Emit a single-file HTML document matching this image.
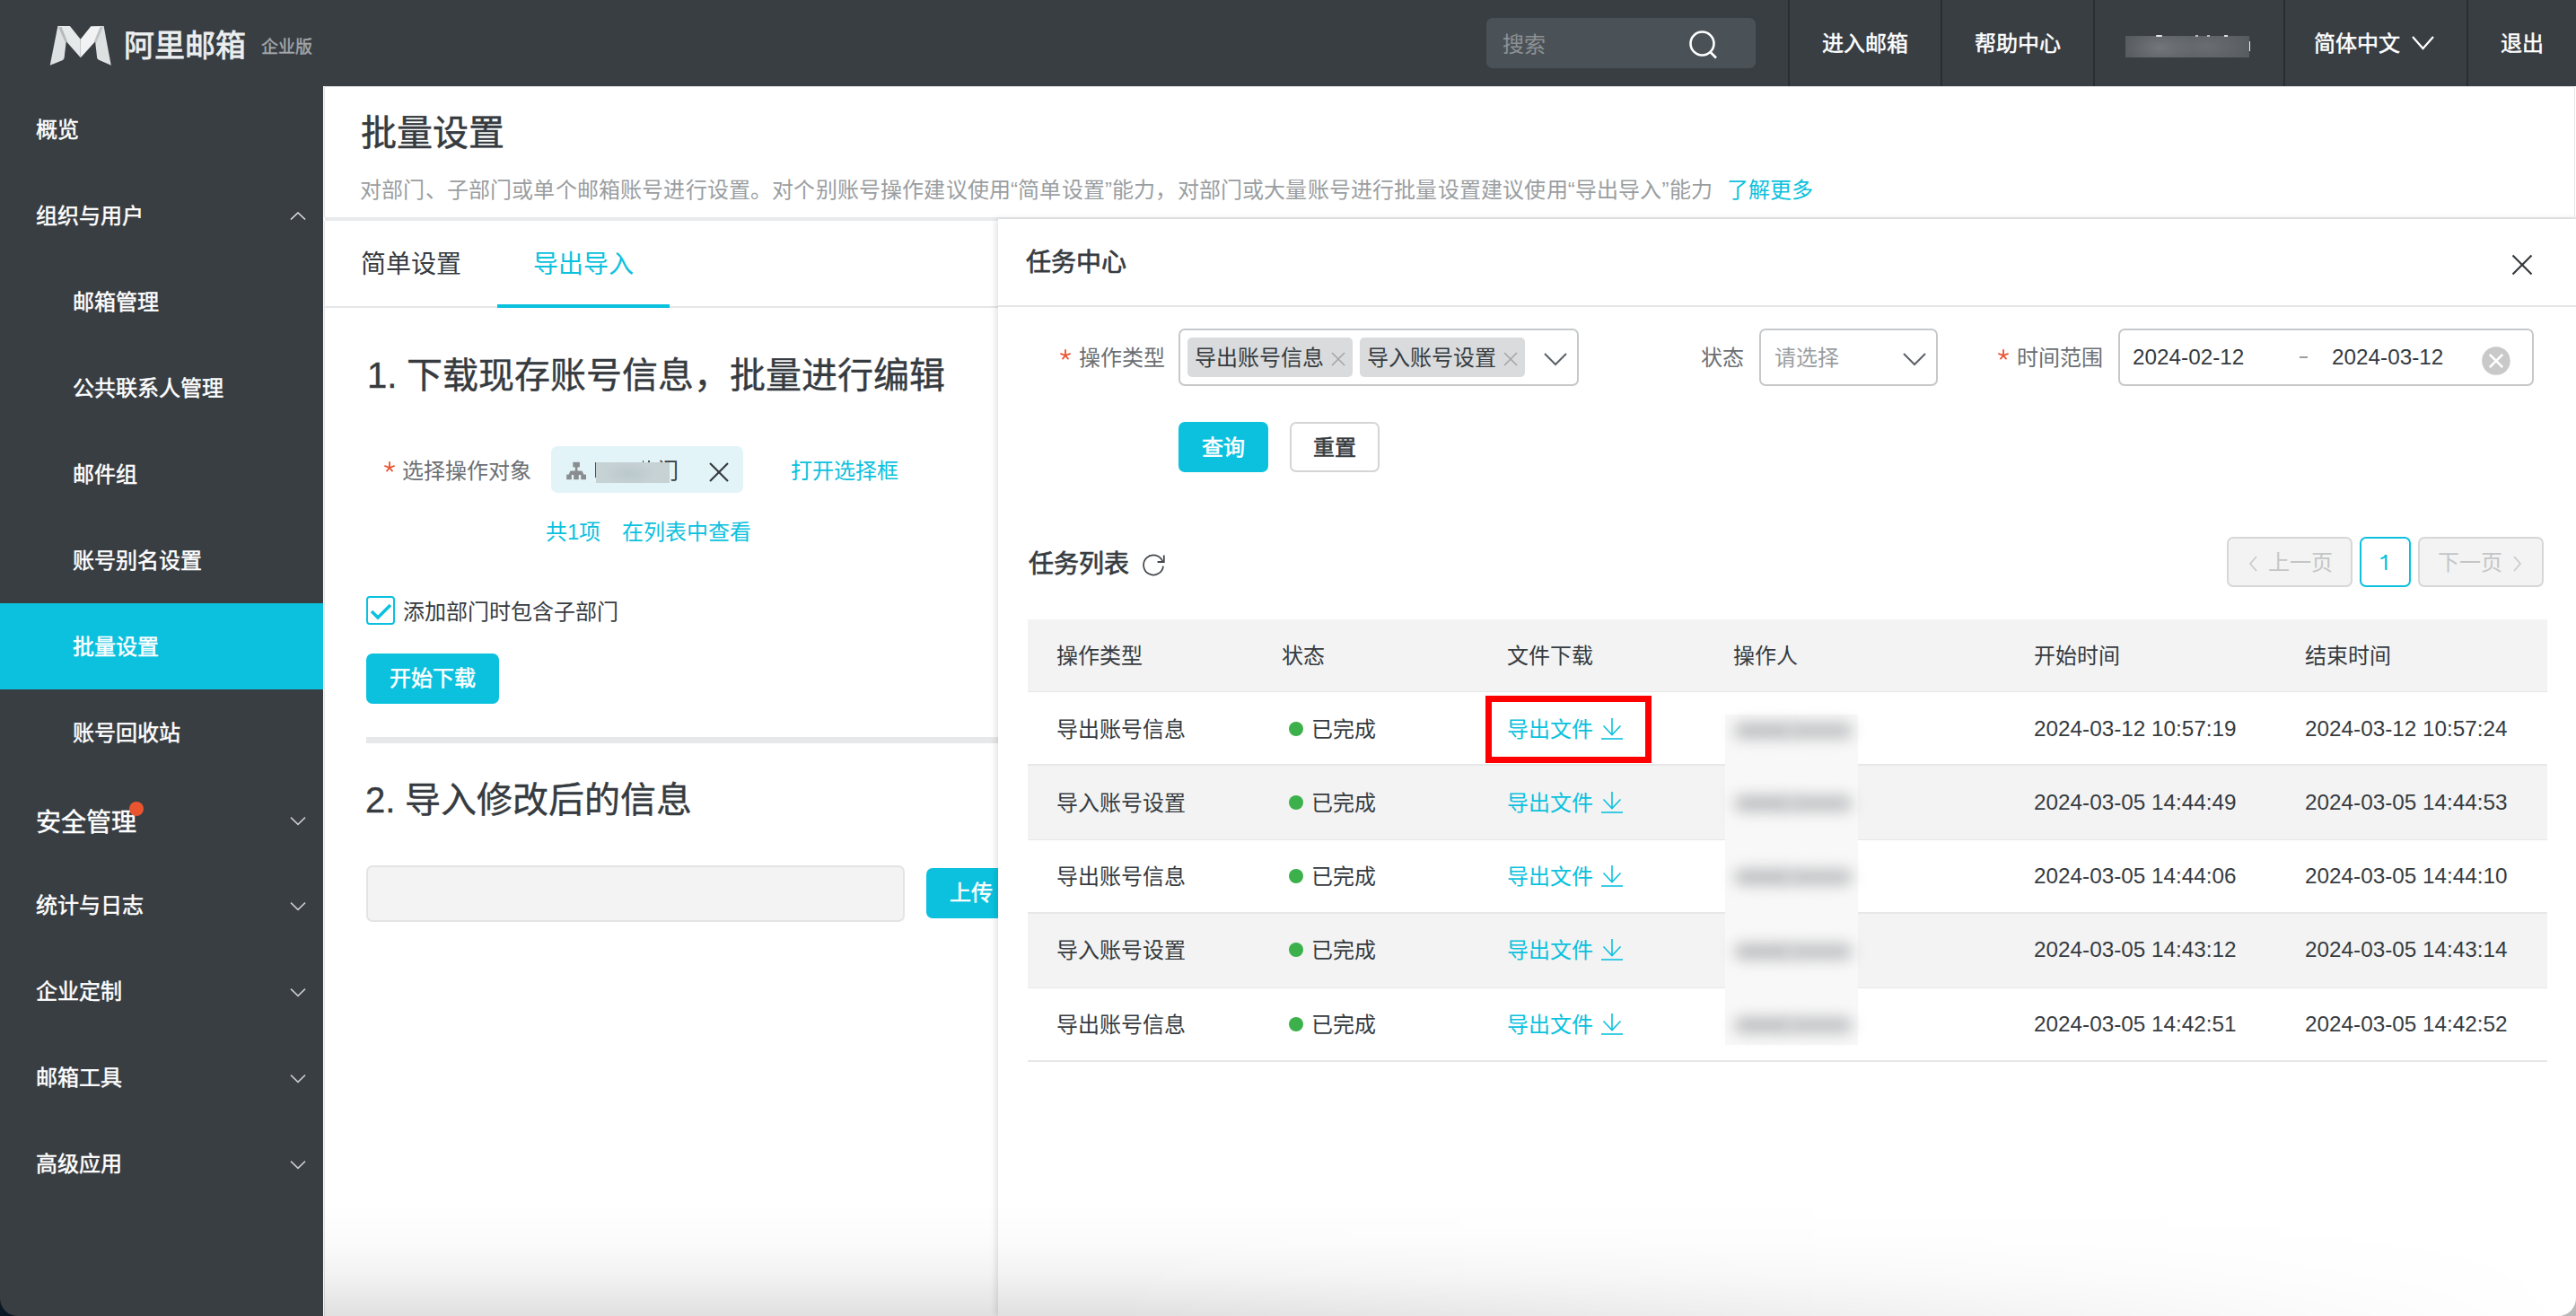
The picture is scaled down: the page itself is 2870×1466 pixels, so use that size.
<!DOCTYPE html>
<html lang="zh-CN"><head><meta charset="utf-8">
<style>
*{box-sizing:border-box;margin:0;padding:0}
html,body{width:2870px;height:1466px;overflow:hidden;background:#ffffff;font-family:"Liberation Sans",sans-serif;}
.a{position:absolute;white-space:nowrap}
.t24{font-size:24px;line-height:24px}
.t28{font-size:28px;line-height:28px}
.t40{font-size:40px;line-height:40px}
#hdr{position:absolute;left:0;top:0;width:2870px;height:96px;background:#393e43}
#side{position:absolute;left:0;top:96px;width:360px;height:1370px;background:#393e43;}
.sdiv{position:absolute;top:0;width:2px;height:96px;background:#2a2e32}
.navt{color:#fff;-webkit-text-stroke:0.5px #fff}
.side1{color:#fff;left:40px;-webkit-text-stroke:0.5px #fff}
.side2{color:#fff;left:81px;-webkit-text-stroke:0.5px #fff}
.chev{position:absolute;width:20px;height:20px}
.cy{color:#0bc1de}
.gray6{color:#6b6f73}
.dark{color:#363b40}
</style></head><body>
<div id="hdr">
  <svg class="a" style="left:50px;top:24px" width="82" height="54" viewBox="0 0 82 54">
    <polygon points="14.4,5.1 22,9 23.4,25 21.5,41 20,43 5.7,48.8" fill="#dde1e2"/>
    <polygon points="65.6,4.9 58,9 56.4,25 58.2,41 60,42.8 73.8,48.8" fill="#dde1e2"/>
    <polygon points="14.4,5.1 27.9,5.1 39.7,19.7 39.8,40.2 24.6,23" fill="#e6e9ea"/>
    <polygon points="65.6,4.9 51.3,5.3 39.7,19.7 39.8,40.2 55.4,23" fill="#f0f2f3"/>
    <polygon points="15,6 18.5,6 25,22 23.2,24.2" fill="#b7babd"/>
    <polygon points="65,5.5 61.5,5.8 55,22 56.8,24.2" fill="#c0c3c5"/>
  </svg>
  <div class="a" style="left:138px;top:34px;font-size:34px;line-height:34px;color:#eceeef;letter-spacing:0px;-webkit-text-stroke:0.8px #eceeef">阿里邮箱</div>
  <div class="a" style="left:291px;top:43px;font-size:19px;line-height:19px;color:#a4a8ab;-webkit-text-stroke:0.4px #a4a8ab">企业版</div>
  <div class="a" style="left:1656px;top:20px;width:300px;height:56px;border-radius:7px;background:#4b5257"></div>
  <div class="a t24" style="left:1674px;top:38px;color:#8d9195">搜索</div>
  <svg class="a" style="left:1876px;top:28px" width="40" height="40" viewBox="0 0 40 40">
    <circle cx="20.5" cy="20.5" r="13" fill="none" stroke="#fff" stroke-width="2.6"/>
    <line x1="29.5" y1="30" x2="36" y2="36.5" stroke="#fff" stroke-width="2.6"/>
  </svg>
  <div class="sdiv" style="left:1992px"></div>
  <div class="sdiv" style="left:2162px"></div>
  <div class="sdiv" style="left:2332px"></div>
  <div class="sdiv" style="left:2544px"></div>
  <div class="sdiv" style="left:2748px"></div>
  <div class="a t24 navt" style="left:2030px;top:37px">进入邮箱</div>
  <div class="a t24 navt" style="left:2200px;top:37px">帮助中心</div>
  <div class="a" style="left:2368px;top:40px;width:138px;height:24px;background:radial-gradient(ellipse 40px 22px at 28% 55%,#73777b,rgba(115,119,123,0)),radial-gradient(ellipse 50px 22px at 65% 50%,#6a6e72,rgba(106,110,114,0)),#575c60"></div>
<div class="a" style="left:2402px;top:38.5px;width:7px;height:2px;border-radius:1px;background:#e8e8e8"></div>
<div class="a" style="left:2446px;top:39px;width:3px;height:1.5px;background:#bbb"></div>
<div class="a" style="left:2459px;top:39px;width:3px;height:1.5px;background:#bbb"></div>
<div class="a" style="left:2478px;top:38.5px;width:4px;height:2px;background:#ddd"></div>
<div class="a" style="left:2505.5px;top:46px;width:1.6px;height:11px;background:#f0f0f0"></div>
  <div class="a t24 navt" style="left:2578px;top:37px">简体中文</div>
  <svg class="a" style="left:2686px;top:38px" width="28" height="20" viewBox="0 0 28 20">
    <polyline points="2,3 13.5,16 25,3" fill="none" stroke="#fff" stroke-width="2.2"/>
  </svg>
  <div class="a t24 navt" style="left:2786px;top:37px">退出</div>
</div>

<div id="side"></div>
<div class="a" style="left:0;top:672px;width:360px;height:96px;background:#0bc1de"></div>
<div class="a t24 side1" style="top:133px">概览</div>
<div class="a t24 side1" style="top:229px">组织与用户</div>
<svg class="a" style="left:322px;top:230px" width="20" height="20" viewBox="0 0 20 20"><polyline points="2,14.5 10,7 18,14.5" fill="none" stroke="#e6e7e8" stroke-width="1.5"/></svg>
<div class="a t24 side2" style="top:325px">邮箱管理</div>
<div class="a t24 side2" style="top:421px">公共联系人管理</div>
<div class="a t24 side2" style="top:517px">邮件组</div>
<div class="a t24 side2" style="top:613px">账号别名设置</div>
<div class="a t24 side2" style="top:709px">批量设置</div>
<div class="a t24 side2" style="top:805px">账号回收站</div>
<div class="a t28 side1" style="top:903px">安全管理</div>
<div class="a" style="left:144px;top:893px;width:16px;height:16px;border-radius:50%;background:#ea5530"></div>
<svg class="a" style="left:322px;top:903px" width="20" height="20" viewBox="0 0 20 20"><polyline points="2,7.6 10,15.4 18,7.6" fill="none" stroke="#cbcdcf" stroke-width="1.5"/></svg>
<div class="a t24 side1" style="top:997px">统计与日志</div>
<svg class="a" style="left:322px;top:998px" width="20" height="20" viewBox="0 0 20 20"><polyline points="2,7.6 10,15.4 18,7.6" fill="none" stroke="#cbcdcf" stroke-width="1.5"/></svg>
<div class="a t24 side1" style="top:1093px">企业定制</div>
<svg class="a" style="left:322px;top:1094px" width="20" height="20" viewBox="0 0 20 20"><polyline points="2,7.6 10,15.4 18,7.6" fill="none" stroke="#cbcdcf" stroke-width="1.5"/></svg>
<div class="a t24 side1" style="top:1189px">邮箱工具</div>
<svg class="a" style="left:322px;top:1190px" width="20" height="20" viewBox="0 0 20 20"><polyline points="2,7.6 10,15.4 18,7.6" fill="none" stroke="#cbcdcf" stroke-width="1.5"/></svg>
<div class="a t24 side1" style="top:1285px">高级应用</div>
<svg class="a" style="left:322px;top:1286px" width="20" height="20" viewBox="0 0 20 20"><polyline points="2,7.6 10,15.4 18,7.6" fill="none" stroke="#cbcdcf" stroke-width="1.5"/></svg>


<!-- page header card -->
<div class="a" style="left:361px;top:96px;width:2508px;height:147px;background:#fff;border:1.5px solid #e3e5e6;border-radius:2px"></div>
<div class="a" style="left:362px;top:242px;width:2508px;height:4px;background:#e8eaeb"></div>
<div class="a" style="left:361px;top:246px;width:2509px;height:1220px;background:#fff;border-left:1px solid #e3e5e6"></div>
<div class="a t40 dark" style="left:402px;top:128px;-webkit-text-stroke:0.5px #363b40">批量设置</div>
<div class="a t24" style="left:401px;top:200px;color:#9a9ea1;letter-spacing:0.17px">对部门、子部门或单个邮箱账号进行设置。对个别账号操作建议使用“简单设置”能力，对部门或大量账号进行批量设置建议使用“导出导入”能力</div>
<div class="a t24 cy" style="left:1924px;top:200px">了解更多</div>
<!-- tabs -->
<div class="a t28 dark" style="left:402px;top:281px">简单设置</div>
<div class="a t28 cy" style="left:594px;top:281px">导出导入</div>
<div class="a" style="left:362px;top:341px;width:750px;height:2px;background:#e4e6e7"></div>
<div class="a" style="left:554px;top:339px;width:192px;height:4px;background:#0bc1de"></div>
<!-- section 1 -->
<div class="a t40 dark" style="left:409px;top:398px;-webkit-text-stroke:0.4px #363b40">1. 下载现存账号信息，批量进行编辑</div>
<svg class="a" style="left:425.8px;top:511.9px" width="16" height="16" viewBox="0 0 16 16"><g stroke="#ea5130" stroke-width="1.8" stroke-linecap="round" transform="translate(8,9)"><line x1="0" y1="0" x2="0" y2="-6"/><line x1="0" y1="0" x2="-5" y2="-1.9"/><line x1="0" y1="0" x2="5" y2="-1.9"/><line x1="0" y1="0" x2="-3" y2="3.6"/><line x1="0" y1="0" x2="3" y2="3.6"/></g></svg>
<div class="a t24 gray6" style="left:448px;top:513px">选择操作对象</div>
<div class="a" style="left:614px;top:497px;width:214px;height:52px;border-radius:7px;background:#e2f4f8"></div>
<svg class="a" style="left:630px;top:513px" width="24" height="24" viewBox="0 0 24 24">
  <rect x="8.3" y="1.8" width="7.6" height="5.6" fill="#8a8d90"/>
  <rect x="10.8" y="7" width="2.6" height="5" fill="#8a8d90"/>
  <polygon points="3.5,16 5.5,11.5 18.5,11.5 20.5,16" fill="#8a8d90"/>
  <rect x="1.2" y="15.6" width="5.6" height="5.6" fill="#8a8d90"/>
  <rect x="9.2" y="15.6" width="5.6" height="5.6" fill="#8a8d90"/>
  <rect x="17.2" y="15.6" width="5.8" height="5.6" fill="#8a8d90"/>
  <rect x="10.8" y="11" width="2.6" height="5" fill="#8a8d90"/>
</svg>
<div class="a t24 dark" style="left:732px;top:513px">门</div>
<div class="a" style="left:663px;top:515px;width:1.6px;height:17px;background:#4a4f53"></div>
<div class="a" style="left:715.5px;top:513px;width:1.6px;height:3px;background:#4a4f53"></div>
<div class="a" style="left:722px;top:513px;width:1.6px;height:3px;background:#4a4f53"></div>
<div class="a" style="left:664px;top:514.5px;width:82px;height:23px;background:radial-gradient(ellipse 30px 14px at 45% 55%,#bac8cc,rgba(186,200,204,0)),#c7d2d5"></div>
<svg class="a" style="left:788px;top:513px" width="26" height="26" viewBox="0 0 26 26">
  <line x1="3" y1="3" x2="23" y2="23" stroke="#34393d" stroke-width="2.2"/>
  <line x1="23" y1="3" x2="3" y2="23" stroke="#34393d" stroke-width="2.2"/>
</svg>
<div class="a t24 cy" style="left:881px;top:513px">打开选择框</div>
<div class="a t24 cy" style="left:608px;top:581px">共1项</div>
<div class="a t24 cy" style="left:693px;top:581px">在列表中查看</div>
<div class="a" style="left:408px;top:664px;width:32px;height:32px;border:2px solid #0bc1de;border-radius:4px;background:#fff"></div>
<svg class="a" style="left:408px;top:664px" width="32" height="32" viewBox="0 0 32 32">
  <polyline points="6,17 13,24 27,10" fill="none" stroke="#0bc1de" stroke-width="3.5"/>
</svg>
<div class="a t24 dark" style="left:449px;top:670px">添加部门时包含子部门</div>
<div class="a" style="left:408px;top:728px;width:148px;height:56px;border-radius:7px;background:#0bc1de"></div>
<div class="a t24" style="left:434px;top:744px;color:#fff;-webkit-text-stroke:0.6px #fff">开始下载</div>
<div class="a" style="left:408px;top:821px;width:704px;height:7px;background:#e6e8ea"></div>
<div class="a t40 dark" style="left:407px;top:871px;-webkit-text-stroke:0.4px #363b40">2. 导入修改后的信息</div>
<div class="a" style="left:408px;top:964px;width:600px;height:63px;border-radius:7px;background:#f3f3f3;border:2px solid #e4e4e4"></div>
<div class="a" style="left:1032px;top:967px;width:100px;height:56px;border-radius:7px;background:#0bc1de"></div>
<div class="a t24" style="left:1058px;top:983px;color:#fff;-webkit-text-stroke:0.6px #fff">上传</div>


<!-- task panel -->
<div class="a" style="left:1112px;top:244px;width:1758px;height:1222px;background:#fff;box-shadow:-2px 0 7px rgba(0,0,0,0.13)"></div>
<div class="a t28 dark" style="left:1143px;top:279px;-webkit-text-stroke:0.7px #363b40">任务中心</div>
<svg class="a" style="left:2797px;top:282px" width="26" height="26" viewBox="0 0 26 26">
  <line x1="2.5" y1="2.5" x2="23.5" y2="23.5" stroke="#34393d" stroke-width="2.2"/>
  <line x1="23.5" y1="2.5" x2="2.5" y2="23.5" stroke="#34393d" stroke-width="2.2"/>
</svg>
<div class="a" style="left:1112px;top:340px;width:1758px;height:2px;background:#e4e6e7"></div>
<!-- filters -->
<svg class="a" style="left:1178.7px;top:386.9px" width="16" height="16" viewBox="0 0 16 16"><g stroke="#ea5130" stroke-width="1.8" stroke-linecap="round" transform="translate(8,9)"><line x1="0" y1="0" x2="0" y2="-6"/><line x1="0" y1="0" x2="-5" y2="-1.9"/><line x1="0" y1="0" x2="5" y2="-1.9"/><line x1="0" y1="0" x2="-3" y2="3.6"/><line x1="0" y1="0" x2="3" y2="3.6"/></g></svg>
<div class="a t24 gray6" style="left:1202px;top:387px">操作类型</div>
<div class="a" style="left:1313px;top:366px;width:446px;height:64px;border:2px solid #c6c8ca;border-radius:7px;background:#fff"></div>
<div class="a" style="left:1323px;top:376px;width:184px;height:44px;border-radius:5px;background:#dadbdd"></div>
<div class="a t24 dark" style="left:1331px;top:387px">导出账号信息</div>
<svg class="a" style="left:1482px;top:391px" width="18" height="18" viewBox="0 0 18 18"><line x1="2" y1="2" x2="16" y2="16" stroke="#a3a6a9" stroke-width="1.6"/><line x1="16" y1="2" x2="2" y2="16" stroke="#a3a6a9" stroke-width="1.6"/></svg>
<div class="a" style="left:1515px;top:376px;width:184px;height:44px;border-radius:5px;background:#dadbdd"></div>
<div class="a t24 dark" style="left:1523px;top:387px">导入账号设置</div>
<svg class="a" style="left:1674px;top:391px" width="18" height="18" viewBox="0 0 18 18"><line x1="2" y1="2" x2="16" y2="16" stroke="#a3a6a9" stroke-width="1.6"/><line x1="16" y1="2" x2="2" y2="16" stroke="#a3a6a9" stroke-width="1.6"/></svg>
<svg class="a" style="left:1719px;top:390px" width="28" height="20" viewBox="0 0 28 20"><polyline points="2,4 14,16 26,4" fill="none" stroke="#5c6166" stroke-width="2"/></svg>

<div class="a t24 gray6" style="left:1895px;top:387px">状态</div>
<div class="a" style="left:1960px;top:366px;width:199px;height:64px;border:2px solid #c6c8ca;border-radius:7px;background:#fff"></div>
<div class="a t24" style="left:1977px;top:387px;color:#9a9ea1">请选择</div>
<svg class="a" style="left:2119px;top:390px" width="28" height="20" viewBox="0 0 28 20"><polyline points="2,4 14,16 26,4" fill="none" stroke="#5c6166" stroke-width="2"/></svg>

<svg class="a" style="left:2224.4px;top:386.9px" width="16" height="16" viewBox="0 0 16 16"><g stroke="#ea5130" stroke-width="1.8" stroke-linecap="round" transform="translate(8,9)"><line x1="0" y1="0" x2="0" y2="-6"/><line x1="0" y1="0" x2="-5" y2="-1.9"/><line x1="0" y1="0" x2="5" y2="-1.9"/><line x1="0" y1="0" x2="-3" y2="3.6"/><line x1="0" y1="0" x2="3" y2="3.6"/></g></svg>
<div class="a t24 gray6" style="left:2247px;top:387px">时间范围</div>
<div class="a" style="left:2360px;top:366px;width:463px;height:64px;border:2px solid #c6c8ca;border-radius:7px;background:#fff"></div>
<div class="a t24 dark" style="left:2376px;top:386px;font-size:24.3px">2024-02-12</div>
<div class="a" style="left:2562px;top:397px;width:9px;height:2px;background:#9a9ea1"></div>
<div class="a t24 dark" style="left:2598px;top:386px;font-size:24.3px">2024-03-12</div>
<svg class="a" style="left:2765px;top:386px" width="32" height="32" viewBox="0 0 32 32"><circle cx="16" cy="16" r="15.8" fill="#c9c9c9"/><line x1="8.8" y1="8.8" x2="23.2" y2="23.2" stroke="#fff" stroke-width="2.6"/><line x1="23.2" y1="8.8" x2="8.8" y2="23.2" stroke="#fff" stroke-width="2.6"/></svg>

<div class="a" style="left:1313px;top:470px;width:100px;height:56px;border-radius:7px;background:#0bc1de"></div>
<div class="a t24" style="left:1339px;top:487px;color:#fff;-webkit-text-stroke:0.6px #fff">查询</div>
<div class="a" style="left:1437px;top:470px;width:100px;height:56px;border-radius:7px;background:#fff;border:2px solid #d3d5d6"></div>
<div class="a t24 dark" style="left:1463px;top:487px;-webkit-text-stroke:0.6px #363b40">重置</div>

<div class="a t28 dark" style="left:1146px;top:615px;-webkit-text-stroke:0.7px #363b40">任务列表</div>
<svg class="a" style="left:1270px;top:614.5px" width="30" height="30" viewBox="0 0 30 30"><path d="M26,15.6 A11,11 0 1 1 25.2,10.2" fill="none" stroke="#43484d" stroke-width="1.7"/><polyline points="19.6,11 26.8,11 26.8,3.4" fill="none" stroke="#43484d" stroke-width="1.8"/></svg>

<!-- pagination -->
<div class="a" style="left:2481px;top:598px;width:140px;height:56px;border-radius:7px;background:#f3f3f3;border:2px solid #d6d7d8"></div>
<svg class="a" style="left:2504px;top:618px" width="14" height="20" viewBox="0 0 14 20"><polyline points="10,2 3,10 10,18" fill="none" stroke="#c8c9ca" stroke-width="1.6"/></svg>
<div class="a t24" style="left:2527px;top:615px;color:#c4c5c6">上一页</div>
<div class="a" style="left:2629px;top:598px;width:57px;height:56px;border-radius:7px;background:#fff;border:2px solid #0bc1de"></div>
<svg class="a" style="left:2648px;top:614px" width="16" height="24" viewBox="0 0 16 24"><path d="M10.3,4 V21" stroke="#0bc1de" stroke-width="2.3" fill="none"/><path d="M4.5,8.2 C7.5,7.6 9.5,6 10,4" stroke="#0bc1de" stroke-width="2" fill="none"/></svg>
<div class="a" style="left:2694px;top:598px;width:140px;height:56px;border-radius:7px;background:#f3f3f3;border:2px solid #d6d7d8"></div>
<div class="a t24" style="left:2716px;top:615px;color:#c4c5c6">下一页</div>
<svg class="a" style="left:2797px;top:618px" width="14" height="20" viewBox="0 0 14 20"><polyline points="4,2 11,10 4,18" fill="none" stroke="#c8c9ca" stroke-width="1.6"/></svg>

<div class="a" style="left:1145px;top:690px;width:1693px;height:80px;background:#f3f3f3"></div>
<div class="a t24 dark" style="left:1177px;top:719px">操作类型</div>
<div class="a t24 dark" style="left:1428px;top:719px">状态</div>
<div class="a t24 dark" style="left:1679px;top:719px">文件下载</div>
<div class="a t24 dark" style="left:1931px;top:719px">操作人</div>
<div class="a t24 dark" style="left:2266px;top:719px">开始时间</div>
<div class="a t24 dark" style="left:2568px;top:719px">结束时间</div>
<div class="a" style="left:1145px;top:770px;width:1693px;height:81.5px;background:#fff"></div>
<div class="a" style="left:1145px;top:769.5px;width:1693px;height:1.5px;background:#e6e8e8"></div>
<div class="a t24 dark" style="left:1177px;top:800.5px">导出账号信息</div>
<div class="a" style="left:1436px;top:803.5px;width:16px;height:16px;border-radius:50%;background:#3cb04a"></div>
<div class="a t24 dark" style="left:1461px;top:800.5px">已完成</div>
<div class="a t24 cy" style="left:1679px;top:800.5px">导出文件</div>
<svg class="a" style="left:1782px;top:797.5px" width="28" height="28" viewBox="0 0 28 28"><line x1="14" y1="2" x2="14" y2="21" stroke="#0bc1de" stroke-width="1.6"/><polyline points="4.5,10.5 14,20.5 23.5,10.5" fill="none" stroke="#0bc1de" stroke-width="1.6"/><line x1="2" y1="25" x2="26" y2="25" stroke="#0bc1de" stroke-width="1.6"/></svg>
<div class="a t24 dark" style="left:2266px;top:799.5px;font-size:24.3px">2024-03-12 10:57:19</div>
<div class="a t24 dark" style="left:2568px;top:799.5px;font-size:24.3px">2024-03-12 10:57:24</div>
<div class="a" style="left:1145px;top:851.5px;width:1693px;height:83.5px;background:#f3f3f3"></div>
<div class="a" style="left:1145px;top:851.0px;width:1693px;height:1.5px;background:#e6e8e8"></div>
<div class="a t24 dark" style="left:1177px;top:882.8px">导入账号设置</div>
<div class="a" style="left:1436px;top:885.8px;width:16px;height:16px;border-radius:50%;background:#3cb04a"></div>
<div class="a t24 dark" style="left:1461px;top:882.8px">已完成</div>
<div class="a t24 cy" style="left:1679px;top:882.8px">导出文件</div>
<svg class="a" style="left:1782px;top:879.8px" width="28" height="28" viewBox="0 0 28 28"><line x1="14" y1="2" x2="14" y2="21" stroke="#0bc1de" stroke-width="1.6"/><polyline points="4.5,10.5 14,20.5 23.5,10.5" fill="none" stroke="#0bc1de" stroke-width="1.6"/><line x1="2" y1="25" x2="26" y2="25" stroke="#0bc1de" stroke-width="1.6"/></svg>
<div class="a t24 dark" style="left:2266px;top:881.8px;font-size:24.3px">2024-03-05 14:44:49</div>
<div class="a t24 dark" style="left:2568px;top:881.8px;font-size:24.3px">2024-03-05 14:44:53</div>
<div class="a" style="left:1145px;top:935px;width:1693px;height:81.5px;background:#fff"></div>
<div class="a" style="left:1145px;top:934.5px;width:1693px;height:1.5px;background:#e6e8e8"></div>
<div class="a t24 dark" style="left:1177px;top:965px">导出账号信息</div>
<div class="a" style="left:1436px;top:968px;width:16px;height:16px;border-radius:50%;background:#3cb04a"></div>
<div class="a t24 dark" style="left:1461px;top:965px">已完成</div>
<div class="a t24 cy" style="left:1679px;top:965px">导出文件</div>
<svg class="a" style="left:1782px;top:962px" width="28" height="28" viewBox="0 0 28 28"><line x1="14" y1="2" x2="14" y2="21" stroke="#0bc1de" stroke-width="1.6"/><polyline points="4.5,10.5 14,20.5 23.5,10.5" fill="none" stroke="#0bc1de" stroke-width="1.6"/><line x1="2" y1="25" x2="26" y2="25" stroke="#0bc1de" stroke-width="1.6"/></svg>
<div class="a t24 dark" style="left:2266px;top:964.0px;font-size:24.3px">2024-03-05 14:44:06</div>
<div class="a t24 dark" style="left:2568px;top:964.0px;font-size:24.3px">2024-03-05 14:44:10</div>
<div class="a" style="left:1145px;top:1016.5px;width:1693px;height:83.5px;background:#f3f3f3"></div>
<div class="a" style="left:1145px;top:1016.0px;width:1693px;height:1.5px;background:#e6e8e8"></div>
<div class="a t24 dark" style="left:1177px;top:1047px">导入账号设置</div>
<div class="a" style="left:1436px;top:1050px;width:16px;height:16px;border-radius:50%;background:#3cb04a"></div>
<div class="a t24 dark" style="left:1461px;top:1047px">已完成</div>
<div class="a t24 cy" style="left:1679px;top:1047px">导出文件</div>
<svg class="a" style="left:1782px;top:1044px" width="28" height="28" viewBox="0 0 28 28"><line x1="14" y1="2" x2="14" y2="21" stroke="#0bc1de" stroke-width="1.6"/><polyline points="4.5,10.5 14,20.5 23.5,10.5" fill="none" stroke="#0bc1de" stroke-width="1.6"/><line x1="2" y1="25" x2="26" y2="25" stroke="#0bc1de" stroke-width="1.6"/></svg>
<div class="a t24 dark" style="left:2266px;top:1046.0px;font-size:24.3px">2024-03-05 14:43:12</div>
<div class="a t24 dark" style="left:2568px;top:1046.0px;font-size:24.3px">2024-03-05 14:43:14</div>
<div class="a" style="left:1145px;top:1100px;width:1693px;height:81.5px;background:#fff"></div>
<div class="a" style="left:1145px;top:1099.5px;width:1693px;height:1.5px;background:#e6e8e8"></div>
<div class="a t24 dark" style="left:1177px;top:1129.5px">导出账号信息</div>
<div class="a" style="left:1436px;top:1132.5px;width:16px;height:16px;border-radius:50%;background:#3cb04a"></div>
<div class="a t24 dark" style="left:1461px;top:1129.5px">已完成</div>
<div class="a t24 cy" style="left:1679px;top:1129.5px">导出文件</div>
<svg class="a" style="left:1782px;top:1126.5px" width="28" height="28" viewBox="0 0 28 28"><line x1="14" y1="2" x2="14" y2="21" stroke="#0bc1de" stroke-width="1.6"/><polyline points="4.5,10.5 14,20.5 23.5,10.5" fill="none" stroke="#0bc1de" stroke-width="1.6"/><line x1="2" y1="25" x2="26" y2="25" stroke="#0bc1de" stroke-width="1.6"/></svg>
<div class="a t24 dark" style="left:2266px;top:1128.5px;font-size:24.3px">2024-03-05 14:42:51</div>
<div class="a t24 dark" style="left:2568px;top:1128.5px;font-size:24.3px">2024-03-05 14:42:52</div>
<div class="a" style="left:1145px;top:1181.0px;width:1693px;height:1.5px;background:#e6e8e8"></div>
<div class="a" style="left:1922px;top:796px;width:148px;height:368px;background:#f8f8f8"></div>
<div class="a" style="left:1932px;top:804.5px;width:66px;height:18px;border-radius:9px;background:#bdbec0;filter:blur(8px)"></div>
<div class="a" style="left:1992px;top:804.5px;width:72px;height:18px;border-radius:9px;background:#c0c1c3;filter:blur(8px)"></div>
<div class="a" style="left:1932px;top:886px;width:66px;height:18px;border-radius:9px;background:#bdbec0;filter:blur(8px)"></div>
<div class="a" style="left:1992px;top:886px;width:72px;height:18px;border-radius:9px;background:#c0c1c3;filter:blur(8px)"></div>
<div class="a" style="left:1932px;top:968px;width:66px;height:18px;border-radius:9px;background:#bdbec0;filter:blur(8px)"></div>
<div class="a" style="left:1992px;top:968px;width:72px;height:18px;border-radius:9px;background:#c0c1c3;filter:blur(8px)"></div>
<div class="a" style="left:1932px;top:1051px;width:66px;height:18px;border-radius:9px;background:#bdbec0;filter:blur(8px)"></div>
<div class="a" style="left:1992px;top:1051px;width:72px;height:18px;border-radius:9px;background:#c0c1c3;filter:blur(8px)"></div>
<div class="a" style="left:1932px;top:1132.6px;width:66px;height:18px;border-radius:9px;background:#bdbec0;filter:blur(8px)"></div>
<div class="a" style="left:1992px;top:1132.6px;width:72px;height:18px;border-radius:9px;background:#c0c1c3;filter:blur(8px)"></div>





<div class="a" style="left:1655px;top:775px;width:185px;height:75px;border:7px solid #ff0000"></div>

<div class="a" style="left:361px;top:1340px;width:2509px;height:126px;background:linear-gradient(180deg,rgba(0,0,0,0) 0%,rgba(0,0,0,0.015) 35%,rgba(0,0,0,0.05) 65%,rgba(0,0,0,0.12) 100%);-webkit-mask-image:linear-gradient(90deg,#000 0%,#000 35%,rgba(0,0,0,0.15) 88%,rgba(0,0,0,0) 100%)"></div>
<svg class="a" style="left:0;top:1446px" width="20" height="20" viewBox="0 0 20 20"><path d="M0,0 A20,20 0 0 0 20,20 L0,20 Z" fill="#0b1826"/></svg>
<svg class="a" style="left:2850px;top:1446px" width="20" height="20" viewBox="0 0 20 20"><path d="M20,0 A20,20 0 0 1 0,20 L20,20 Z" fill="#b9b9b9"/></svg>

</body></html>
